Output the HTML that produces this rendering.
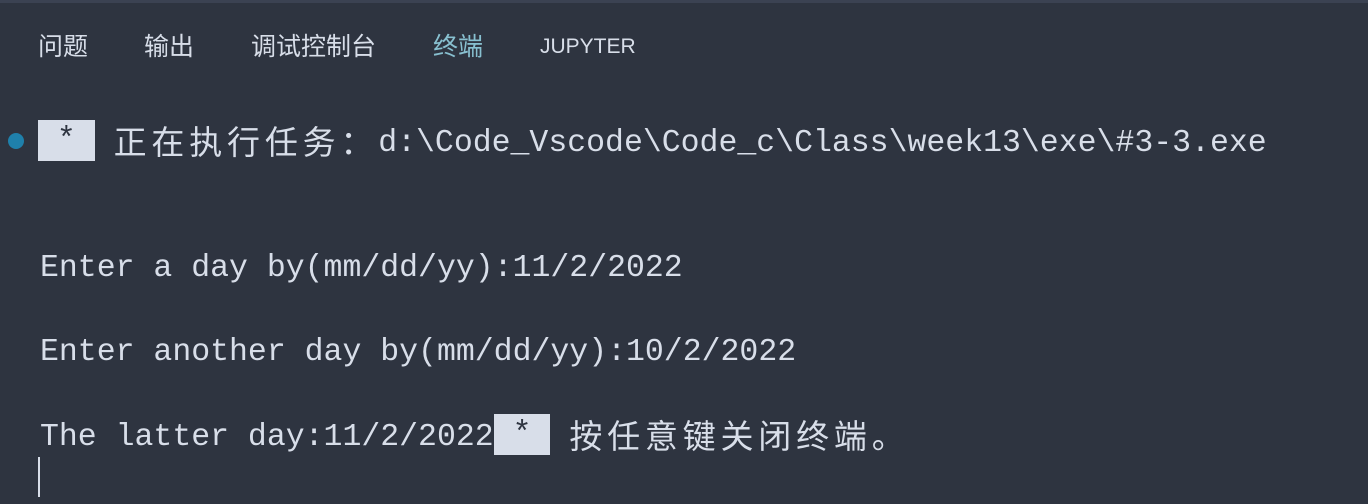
<!DOCTYPE html>
<html><head><meta charset="utf-8"><style>
body{margin:0;width:1368px;height:504px;background:#2e3440;overflow:hidden;position:relative;font-family:"Liberation Sans","Noto Sans CJK SC",sans-serif}
.top{position:absolute;left:0;top:0;width:1368px;height:3px;background:#3b4252}
.tab{position:absolute;top:31px;font-size:25px;color:#d8dee9;line-height:32px}
.mono{position:absolute;left:40px;font-family:"Liberation Mono","Noto Sans CJK SC",monospace;font-size:31.5px;color:#d8dee9;line-height:41px;white-space:pre}
.c{display:inline-block;width:37.8px;font-family:"Noto Sans CJK SC",sans-serif;font-size:33px;text-align:left;vertical-align:top;line-height:40px}
.hl{display:inline-block;height:41px;vertical-align:top;background:#d8dee9;color:#2e3440}
</style></head><body>
<div class="top"></div>
<div class="tab" style="left:38px">问题</div>
<div class="tab" style="left:144px">输出</div>
<div class="tab" style="left:251px">调试控制台</div>
<div class="tab" style="left:433px;color:#88c0d0">终端</div>
<div class="tab" style="left:540px;font-size:21px">JUPYTER</div>
<div style="position:absolute;left:8px;top:133px;width:16px;height:16px;border-radius:50%;background:#1f80ab"></div>
<div class="mono" style="top:120px;left:38px"><span class="hl"> * </span> <span class="c">正</span><span class="c">在</span><span class="c">执</span><span class="c">行</span><span class="c">任</span><span class="c">务</span><span class="c">：</span><span style="position:relative;top:3px">d:\Code_Vscode\Code_c\Class\week13\exe\#3-3.exe</span></div>
<div class="mono" style="top:248px">Enter a day by(mm/dd/yy):11/2/2022</div>
<div class="mono" style="top:332px">Enter another day by(mm/dd/yy):10/2/2022</div>
<div class="mono" style="top:414px"><span style="position:relative;top:3px">The latter day:11/2/2022</span><span class="hl"> * </span> <span class="c">按</span><span class="c">任</span><span class="c">意</span><span class="c">键</span><span class="c">关</span><span class="c">闭</span><span class="c">终</span><span class="c">端</span><span class="c">。</span></div>
<div style="position:absolute;left:38px;top:457px;width:2px;height:40px;background:#d8dee9"></div>
</body></html>
